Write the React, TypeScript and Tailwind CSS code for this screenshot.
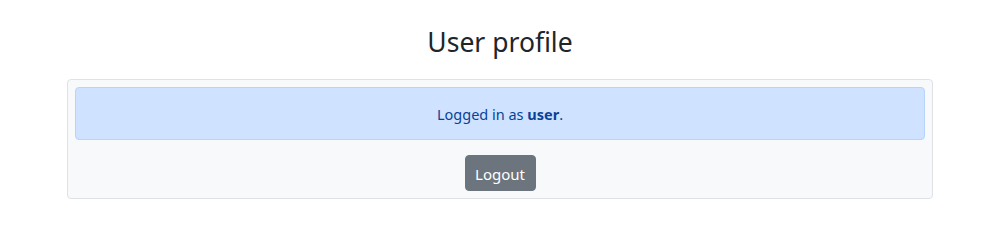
export default function App() {
  return (
    <div className="w-[1000px] h-[250px] bg-white flex flex-col items-center" style={{ fontFamily: '"Noto Sans", "Open Sans", sans-serif' }}>
      <h2 className="mt-[24px] text-[26.5px] leading-[36px] text-[#212529] font-normal">User profile</h2>
      <div className="mt-[19px] w-[866px] bg-[#f8f9fa] border border-[#dee2e6] rounded-[4px] p-[7px] flex flex-col items-center">
        <div className="w-full h-[53px] pt-[3px] bg-[#cfe2ff] border border-[#b6d4fe] rounded-[4px] flex items-center justify-center text-[14.5px] text-[#084298]">
          <span>Logged in as <b className="font-bold">user</b>.</span>
        </div>
        <button className="mt-[15px] w-[71px] h-[36px] pt-[3px] bg-[#6c757d] text-white text-[15px] rounded-[4px] border border-[#6c757d]">Logout</button>
      </div>
    </div>
  );
}
